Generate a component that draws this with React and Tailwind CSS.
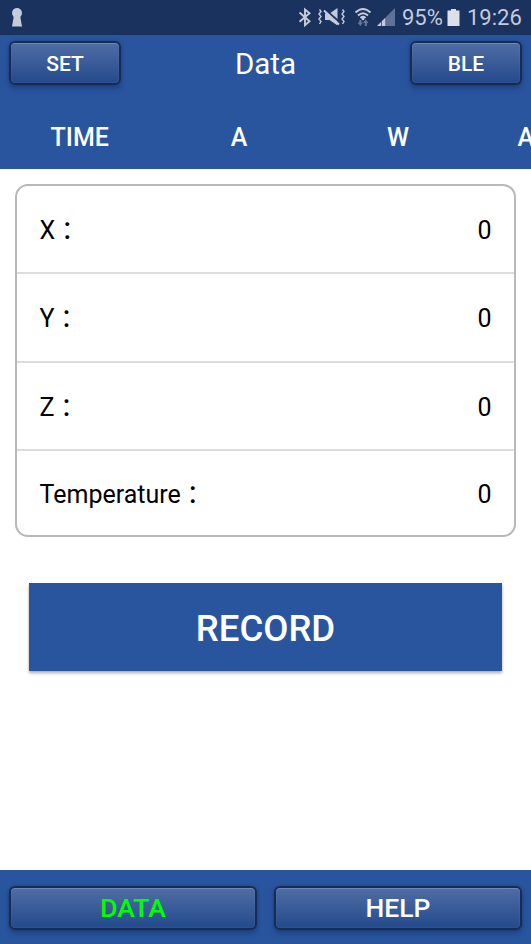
import React from 'react';

function GlossButton({ className, children }) {
  return (
    <button
      className={`rounded-[6px] border-2 border-[#182b51] bg-linear-to-b from-[#4f6da5] to-[#234a8c] font-medium shadow-[0_4px_5px_rgba(20,40,90,0.38),0_0_3px_rgba(20,40,90,0.4),inset_0_1px_0_rgba(255,255,255,0.16),inset_0_0_1px_rgba(255,255,255,0.35)] ${className}`}
    >
      {children}
    </button>
  );
}

function StatusIcons() {
  return (
    <svg width="104" height="35" viewBox="296 0 104 35" fill="none" stroke="#c5cbda">
      <path d="M299.500 12.500l10 8.700-4.500 4V9.500l4.500 3.800-10 8.500" strokeWidth="1.900" />
      <path d="M319.500 9.500l1.500 2-2 2.500 2 2.500-2 2.500 2 2.500-1.500 2.500M342.500 9.500l1.500 2-2 2.500 2 2.500-2 2.500 2 2.500-1.500 2.500" strokeWidth="1.400" />
      <path d="M325 13.500h4.500l8-5.500v17.500l-8-5.500H325z" fill="#c5cbda" stroke="none" />
      <path d="M325 9.500l14.500 12.500" stroke="#1a325e" strokeWidth="2" />
      <path d="M324 10.500l15 14" strokeWidth="2" />
      <path d="M355.500 12.500q7.500-7 15 0M358 15.500q5-4.500 10 0M360.500 18q2.500-2.200 5 0" strokeWidth="2" />
      <circle cx="363" cy="19" r="1.300" fill="#c5cbda" stroke="none" />
      <path d="M357.500 22.500l2.800 3.500 2.700-3.500h-1.700V20h-2v2.500zM363 23l2.700-3.500 2.800 3.500h-1.700V26h-2v-3z" fill="#697a9c" stroke="none" />
      <path d="M386 17v9h9V8z" fill="#5e7196" stroke="none" />
      <path d="M377 26l8.500-8.500V26z" fill="#c5cbda" stroke="none" />
      <path d="M381.500 20v6" stroke="#1a325e" strokeWidth=".7" />
    </svg>
  );
}

function StatusBar() {
  return (
    <header className="flex h-[35px] shrink-0 items-center bg-[#1a325e] text-[22px] leading-[35px] text-[#c5cbda]">
      <svg className="ml-[11px]" width="13" height="35" viewBox="0 0 13 35" fill="#c5cbda">
        <circle cx="6" cy="13" r="5" />
        <path d="M3 15h6l2 11.500H1z" />
      </svg>
      <div className="ml-auto flex items-center pr-[9px]">
        <StatusIcons />
        <span className="ml-[2px] w-[41px] whitespace-nowrap">95%</span>
        <svg className="ml-[4px]" width="13" height="35" viewBox="0 0 13 35" fill="#dbe0e9">
          <path d="M4 9h5v1.500h3.500V26H.5V10.500H4z" />
        </svg>
        <span className="ml-[7px] w-[55px] whitespace-nowrap">19:26</span>
      </div>
    </header>
  );
}

function Row({ label, className }) {
  return (
    <div className={`flex items-center justify-between px-[22.500px] ${className}`}>
      <span>
        {label}
        <span className="relative -left-[0.500px] top-[1px]">：</span>
      </span>
      <span>0</span>
    </div>
  );
}

export default function App() {
  return (
    <div className="flex h-[944px] w-[531px] flex-col overflow-hidden bg-white font-['Roboto','Noto_Sans_CJK_TC',sans-serif] text-white">
      <StatusBar />
      <section className="h-[134px] shrink-0 bg-[#29559f]">
        <div className="flex items-center justify-between px-[9px] pt-[6px]">
          <GlossButton className="h-[44px] w-[112px] pt-[3px] text-[21px]">SET</GlossButton>
          <h1 className="pt-[2px] text-[29.500px] leading-[42px]">Data</h1>
          <GlossButton className="h-[44px] w-[112px] pt-[3px] text-[21px]">BLE</GlossButton>
        </div>
        <nav className="flex h-[84px] items-center overflow-hidden pt-[22px] text-[25px] font-medium leading-[30px]">
          <span className="w-[159.500px] shrink-0 text-center">TIME</span>
          <span className="w-[159px] shrink-0 text-center">A</span>
          <span className="w-[159px] shrink-0 text-center">W</span>
          <span className="ml-[40px] shrink-0">A</span>
        </nav>
      </section>
      <main className="flex-1">
        <div className="mx-[15px] mt-[15px] h-[353px] rounded-[13px] border-2 border-[#b8b8b8] text-[25px] leading-[30px] text-black">
          <Row label="X" className="h-[88px] border-b-2 border-[#dcdcdc] pt-[4px]" />
          <Row label="Y" className="h-[89px] border-b-2 border-[#dcdcdc] pt-[3px]" />
          <Row label="Z" className="h-[88px] border-b-2 border-[#dcdcdc] pt-[4px]" />
          <Row label="Temperature" className="h-[84px] pt-[4px]" />
        </div>
        <button className="ml-[29px] mt-[46px] block h-[88px] w-[473px] bg-[#29559f] pt-[4px] text-[36.500px] font-medium shadow-[0_2px_3px_rgba(0,0,0,0.35)]">
          RECORD
        </button>
      </main>
      <footer className="flex h-[74px] shrink-0 justify-between bg-[#29559f] px-[9px] pt-[16px]">
        <GlossButton className="h-[44px] w-[248px] text-[26.500px] leading-[40px] text-[#00ff00]">DATA</GlossButton>
        <GlossButton className="h-[44px] w-[248px] text-[26.500px] leading-[40px]">HELP</GlossButton>
      </footer>
    </div>
  );
}
